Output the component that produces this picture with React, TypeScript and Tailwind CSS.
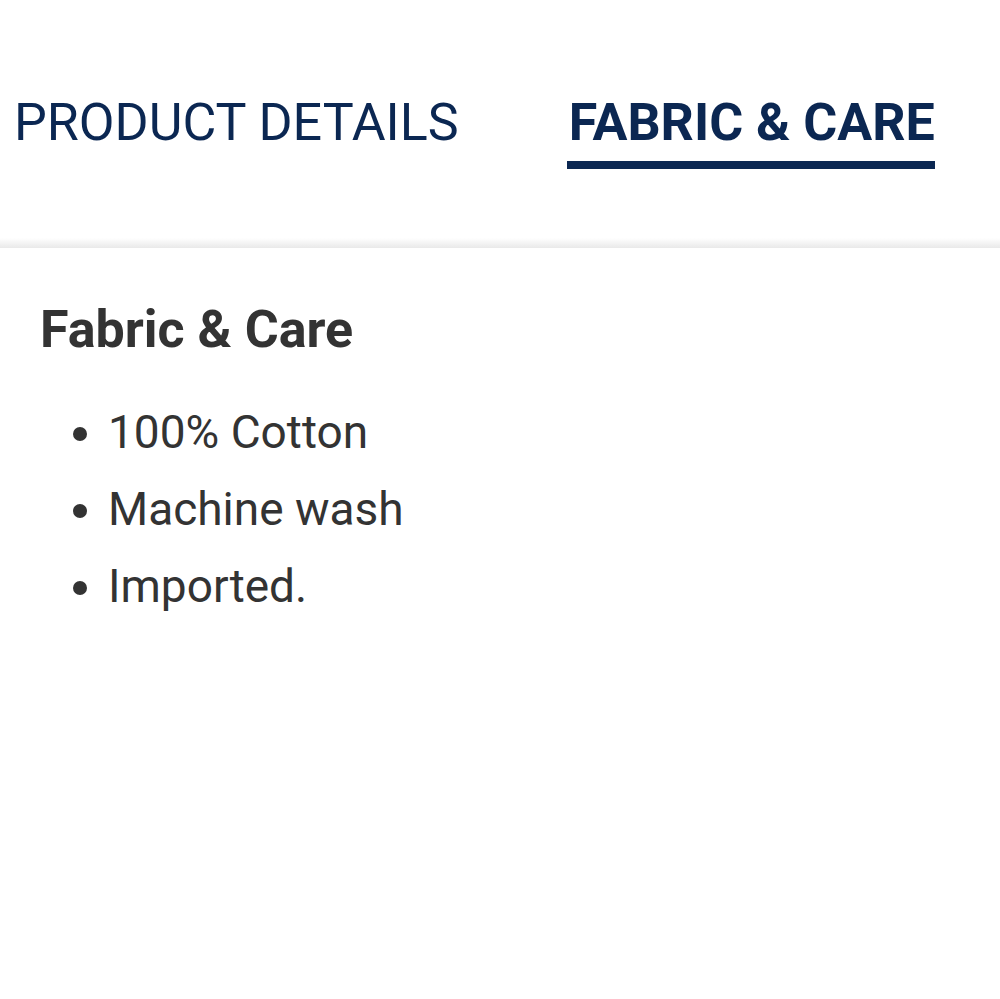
import { useState } from 'react'

const tabs = ['PRODUCT DETAILS', 'FABRIC & CARE']

const care = ['100% Cotton', 'Machine wash', 'Imported.']

export default function App() {
  const [active, setActive] = useState(1)

  return (
    <div className="min-h-screen bg-white font-['Roboto',sans-serif]">
      <nav className="flex h-[238px] items-start gap-[108px] pl-[14px] pt-[97px]">
        {tabs.map((t, i) => (
          <button
            key={t}
            onClick={() => setActive(i)}
            className={`flex flex-col text-[52px] leading-none text-[#0b2752] ${
              i === active ? 'font-bold' : 'font-normal'
            }`}
          >
            <span className={i === active ? 'pl-[2px]' : ''}>{t}</span>
            <span className={`mt-[12px] h-[8px] ${i === active ? 'bg-[#0b2752]' : 'bg-transparent'}`} />
          </button>
        ))}
      </nav>
      <div className="h-[10px] bg-linear-to-b from-white to-[#e9e9e9]" />

      <section className="px-[40px] pt-[56px] text-[#333333]">
        <h2 className="text-[52px] font-bold leading-none">Fabric &amp; Care</h2>
        <ul className="mt-[38px] list-disc pl-[68px] text-[46px] leading-[77px]">
          {care.map((c) => (
            <li key={c}>{c}</li>
          ))}
        </ul>
      </section>
    </div>
  )
}
